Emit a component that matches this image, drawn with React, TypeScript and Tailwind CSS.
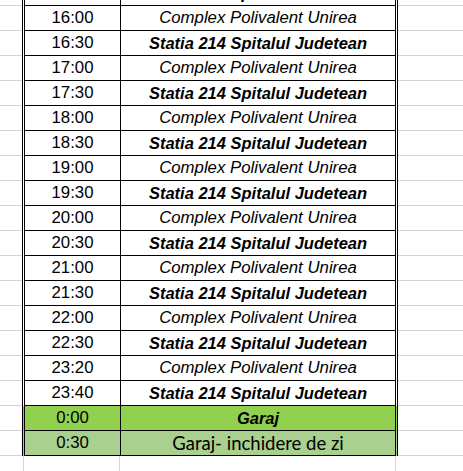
import React from "react";

type Row = { t: string; s: string; kind: "c" | "s" | "g1" | "g2" };

const rows: Row[] = [
  { t: "15:30", s: "Statia 214 Spitalul Judetean", kind: "s" },
  { t: "16:00", s: "Complex Polivalent Unirea", kind: "c" },
  { t: "16:30", s: "Statia 214 Spitalul Judetean", kind: "s" },
  { t: "17:00", s: "Complex Polivalent Unirea", kind: "c" },
  { t: "17:30", s: "Statia 214 Spitalul Judetean", kind: "s" },
  { t: "18:00", s: "Complex Polivalent Unirea", kind: "c" },
  { t: "18:30", s: "Statia 214 Spitalul Judetean", kind: "s" },
  { t: "19:00", s: "Complex Polivalent Unirea", kind: "c" },
  { t: "19:30", s: "Statia 214 Spitalul Judetean", kind: "s" },
  { t: "20:00", s: "Complex Polivalent Unirea", kind: "c" },
  { t: "20:30", s: "Statia 214 Spitalul Judetean", kind: "s" },
  { t: "21:00", s: "Complex Polivalent Unirea", kind: "c" },
  { t: "21:30", s: "Statia 214 Spitalul Judetean", kind: "s" },
  { t: "22:00", s: "Complex Polivalent Unirea", kind: "c" },
  { t: "22:30", s: "Statia 214 Spitalul Judetean", kind: "s" },
  { t: "23:20", s: "Complex Polivalent Unirea", kind: "c" },
  { t: "23:40", s: "Statia 214 Spitalul Judetean", kind: "s" },
  { t: "0:00", s: "Garaj", kind: "g1" },
  { t: "0:30", s: "Garaj- inchidere de zi", kind: "g2" },
];

export default function App() {
  return (
    <div
      className="w-[463px] h-[471px] overflow-hidden bg-white text-black"
      style={{ fontFamily: '"Liberation Sans", Arial, sans-serif' }}
    >
      <div className="-mt-[19px] flex flex-col">
        {rows.map((r, i) => {
          const bg =
            r.kind === "g1" ? "bg-[#92d050]" : r.kind === "g2" ? "bg-[#a9d08e]" : "bg-white";
          const textCls =
            r.kind === "c"
              ? "italic text-[16.8px]"
              : r.kind === "s" || r.kind === "g1"
              ? "italic font-bold text-[16.5px]"
              : "text-[18.5px]";
          return (
            <div key={i} className="flex h-[25px]">
              <div className="w-[22px] shrink-0 border-b border-[#d4d4d4]" />
              <div
                className={`flex shrink-0 border-l-[3px] border-r-[3px] border-double border-black ${bg}`}
              >
                <div className="w-[96px] h-[25px] border-r border-b border-black flex items-center justify-center text-[16.8px] leading-none pt-[1px]">
                  {r.t}
                </div>
                <div
                  className={`w-[274px] h-[25px] border-b border-black flex items-center justify-center leading-none pt-[1px] ${textCls}`}
                  style={
                    r.kind === "g2"
                      ? { fontFamily: 'Lato, "Open Sans", sans-serif' }
                      : undefined
                  }
                >
                  {r.s}
                </div>
              </div>
              <div className="flex-1 border-b border-[#d4d4d4]" />
            </div>
          );
        })}
        <div className="flex h-[25px]">
          <div className="w-[24px] shrink-0 border-r border-[#d4d4d4]" />
          <div className="w-[96px] shrink-0 border-r border-[#d4d4d4]" />
          <div className="w-[276px] shrink-0 border-r border-[#d4d4d4]" />
          <div className="flex-1" />
        </div>
      </div>
    </div>
  );
}
